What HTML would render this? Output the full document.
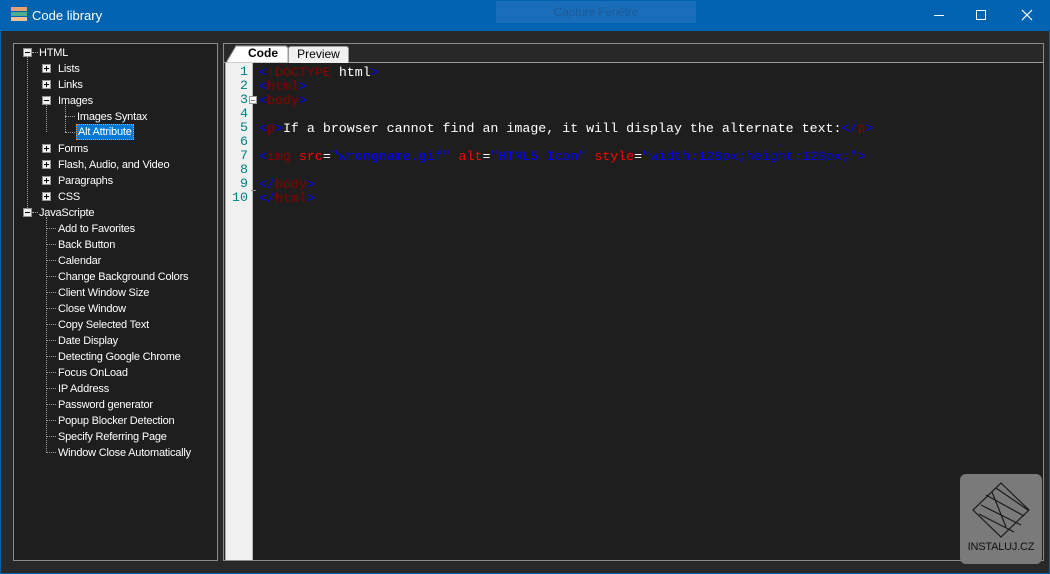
<!DOCTYPE html>
<html><head><style>
*{margin:0;padding:0;box-sizing:border-box}
body{width:1050px;height:574px;background:#282828;position:relative;overflow:hidden;font-family:"Liberation Sans",sans-serif;font-size:11px;letter-spacing:-0.2px;color:#fff;border-left:1px solid #0063b1;border-right:1px solid #0063b1;border-bottom:1px solid #0063b1}
.title{position:absolute;left:0;top:0;width:1050px;height:31px;background:#0063b1}
.a{position:absolute}
.tr{position:absolute;white-space:nowrap;line-height:16px;height:16px}
.box{position:absolute;width:9px;height:9px;border:1px solid #919191;background:#f0f0f0}
.box i{position:absolute;left:1px;top:3px;width:5px;height:1px;background:#000}
.box b{position:absolute;left:3px;top:1px;width:1px;height:5px;background:#000}
.vd{position:absolute;border-left:1px dotted #a0a0a0;width:0}
.hd{position:absolute;border-top:1px dotted #a0a0a0;height:0}
.code{position:absolute;left:258px;font-family:"Liberation Mono",monospace;font-size:13.3px;letter-spacing:0;line-height:14px;white-space:pre}
.ln{position:absolute;left:225px;width:22px;text-align:right;font-family:"Liberation Mono",monospace;font-size:13.3px;letter-spacing:0;line-height:14px;color:#008080}
.bl{color:#0000ff}.dr{color:#8b0000}.rd{color:#ff0000}.w{color:#fff}
</style></head><body>
<div class="title"></div>
<div class="a" style="left:10px;top:7px;width:16px;height:4px;background:#e8a070"></div>
<div class="a" style="left:10px;top:12px;width:16px;height:4px;background:#4caf8a"></div>
<div class="a" style="left:10px;top:17px;width:16px;height:4px;background:#f0c090"></div>
<div class="a" style="left:31px;top:8px;font-size:13px;letter-spacing:0;color:#fff">Code library</div>
<div class="a" style="left:495px;top:1px;width:200px;height:22px;background:#1a6db8;color:#1a5a9a;font-size:12px;text-align:center;line-height:22px">Capture Fenêtre</div>
<div class="a" style="left:933px;top:15px;width:10px;height:1px;background:#fff"></div>
<div class="a" style="left:975px;top:10px;width:10px;height:10px;border:1px solid #fff"></div>
<svg class="a" style="left:1020px;top:9px" width="12" height="12"><path d="M1 1L11 11M11 1L1 11" stroke="#fff" stroke-width="1.2"/></svg>

<div class="a" style="left:12px;top:43px;width:205px;height:518px;border:1px solid #8a8a8a;background:#1e1e1e"></div>
<div class="a" style="left:222px;top:43px;width:821px;height:518px;border:1px solid #8a8a8a;background:#282828"></div>
<div class="a" style="left:223px;top:62px;width:819px;height:1px;background:#9a9a9a"></div>
<div class="a" style="left:224px;top:63px;width:818px;height:497px;background:#1e1e1e;border-left:1px solid #aaa"></div>
<div class="a" style="left:225px;top:63px;width:27px;height:497px;background:#f0f0f0"></div>
<div class="a" style="left:251px;top:63px;width:1px;height:497px;background:#bbb"></div>
<div class="a" style="left:287px;top:46px;width:61px;height:17px;background:#f0f0f0;border:1px solid #999;border-bottom:none;border-radius:3px 3px 0 0;color:#000;text-align:center;line-height:15px;font-size:12px;letter-spacing:0">Preview</div>
<svg class="a" style="left:225px;top:45px" width="64" height="18"><path d="M0 18L10 1H60L62 3V18Z" fill="#fff" stroke="#999"/></svg>
<div class="a" style="left:240px;top:46px;width:44px;color:#000;text-align:center;line-height:15px;font-size:12px;letter-spacing:0;font-weight:bold">Code</div>

<div class="ln" style="top:65px">1<br>2<br>3<br>4<br>5<br>6<br>7<br>8<br>9<br>10</div>
<div class="a" style="left:248px;top:96px;width:8px;height:8px;border:1px solid #999;background:#fff"><div style="position:absolute;left:1px;top:3px;width:4px;height:1px;background:#888"></div></div>
<div class="a" style="left:250px;top:190px;width:5px;height:1px;background:#888"></div>
<div class="code" style="top:66px"><span class="bl">&lt;</span><span class="dr">!DOCTYPE</span> <span class="w">html</span><span class="bl">&gt;</span>
<span class="bl">&lt;</span><span class="dr">html</span><span class="bl">&gt;</span>
<span class="bl">&lt;</span><span class="dr">body</span><span class="bl">&gt;</span>

<span class="bl">&lt;</span><span class="dr">p</span><span class="bl">&gt;</span><span class="w">If a browser cannot find an image, it will display the alternate text:</span><span class="bl">&lt;/</span><span class="dr">p</span><span class="bl">&gt;</span>

<span class="bl">&lt;</span><span class="dr">img</span> <span class="rd">src</span><span class="w">=</span><span class="bl">"wrongname.gif"</span> <span class="rd">alt</span><span class="w">=</span><span class="bl">"HTML5 Icon"</span> <span class="rd">style</span><span class="w">=</span><span class="bl">"width:128px;height:128px;"&gt;</span>

<span class="bl">&lt;/</span><span class="dr">body</span><span class="bl">&gt;</span>
<span class="bl">&lt;/</span><span class="dr">html</span><span class="bl">&gt;</span></div>

<div class="vd" style="left:26px;top:57px;height:155px"></div>
<div class="vd" style="left:45px;top:105px;height:27px"></div>
<div class="vd" style="left:45px;top:217px;height:236px"></div>
<div class="hd" style="left:31px;top:52px;width:6px"></div>
<div class="hd" style="left:31px;top:212px;width:6px"></div>
<div class="hd" style="left:64px;top:116px;width:10px"></div>
<div class="hd" style="left:64px;top:132px;width:10px"></div>
<div class="vd" style="left:64px;top:105px;height:27px"></div>

<div class="box" style="left:22px;top:48px"><i></i></div><div class="tr" style="left:38px;top:45px">HTML</div>
<div class="box" style="left:41px;top:64px"><i></i><b></b></div><div class="tr" style="left:57px;top:61px">Lists</div>
<div class="box" style="left:41px;top:80px"><i></i><b></b></div><div class="tr" style="left:57px;top:77px">Links</div>
<div class="box" style="left:41px;top:96px"><i></i></div><div class="tr" style="left:57px;top:93px">Images</div>
<div class="tr" style="left:76px;top:109px">Images Syntax</div>
<div class="tr" style="left:75px;top:124px;background:#0078d7;border:1px dotted #ff9a3a;padding:0 1px;line-height:15px;height:16px">Alt Attribute</div>
<div class="box" style="left:41px;top:144px"><i></i><b></b></div><div class="tr" style="left:57px;top:141px">Forms</div>
<div class="box" style="left:41px;top:160px"><i></i><b></b></div><div class="tr" style="left:57px;top:157px">Flash, Audio, and Video</div>
<div class="box" style="left:41px;top:176px"><i></i><b></b></div><div class="tr" style="left:57px;top:173px">Paragraphs</div>
<div class="box" style="left:41px;top:192px"><i></i><b></b></div><div class="tr" style="left:57px;top:189px">CSS</div>
<div class="box" style="left:22px;top:208px"><i></i></div><div class="tr" style="left:38px;top:205px">JavaScripte</div>

<div class="hd" style="left:46px;top:228px;width:9px"></div><div class="tr" style="left:57px;top:221px">Add to Favorites</div>
<div class="hd" style="left:46px;top:244px;width:9px"></div><div class="tr" style="left:57px;top:237px">Back Button</div>
<div class="hd" style="left:46px;top:260px;width:9px"></div><div class="tr" style="left:57px;top:253px">Calendar</div>
<div class="hd" style="left:46px;top:276px;width:9px"></div><div class="tr" style="left:57px;top:269px">Change Background Colors</div>
<div class="hd" style="left:46px;top:292px;width:9px"></div><div class="tr" style="left:57px;top:285px">Client Window Size</div>
<div class="hd" style="left:46px;top:308px;width:9px"></div><div class="tr" style="left:57px;top:301px">Close Window</div>
<div class="hd" style="left:46px;top:324px;width:9px"></div><div class="tr" style="left:57px;top:317px">Copy Selected Text</div>
<div class="hd" style="left:46px;top:340px;width:9px"></div><div class="tr" style="left:57px;top:333px">Date Display</div>
<div class="hd" style="left:46px;top:356px;width:9px"></div><div class="tr" style="left:57px;top:349px">Detecting Google Chrome</div>
<div class="hd" style="left:46px;top:372px;width:9px"></div><div class="tr" style="left:57px;top:365px">Focus OnLoad</div>
<div class="hd" style="left:46px;top:388px;width:9px"></div><div class="tr" style="left:57px;top:381px">IP Address</div>
<div class="hd" style="left:46px;top:404px;width:9px"></div><div class="tr" style="left:57px;top:397px">Password generator</div>
<div class="hd" style="left:46px;top:420px;width:9px"></div><div class="tr" style="left:57px;top:413px">Popup Blocker Detection</div>
<div class="hd" style="left:46px;top:436px;width:9px"></div><div class="tr" style="left:57px;top:429px">Specify Referring Page</div>
<div class="hd" style="left:46px;top:452px;width:9px"></div><div class="tr" style="left:57px;top:445px">Window Close Automatically</div>

<div class="a" style="left:959px;top:474px;width:82px;height:90px;background:#7a7a7a;border-radius:6px"></div>
<svg class="a" style="left:965px;top:480px" width="70" height="60"><g fill="none" stroke="#1a1a1a" stroke-width="1.2"><path d="M35 3L63 30L35 57L7 30Z"/><path d="M20 15L58 36M15 25L55 45M13 34L48 52M30 8L62 30M26 12L40 47"/></g></svg>
<div class="a" style="left:962px;top:541px;width:76px;text-align:center;font-size:11px;color:#111">INSTALUJ.CZ</div>
</body></html>
